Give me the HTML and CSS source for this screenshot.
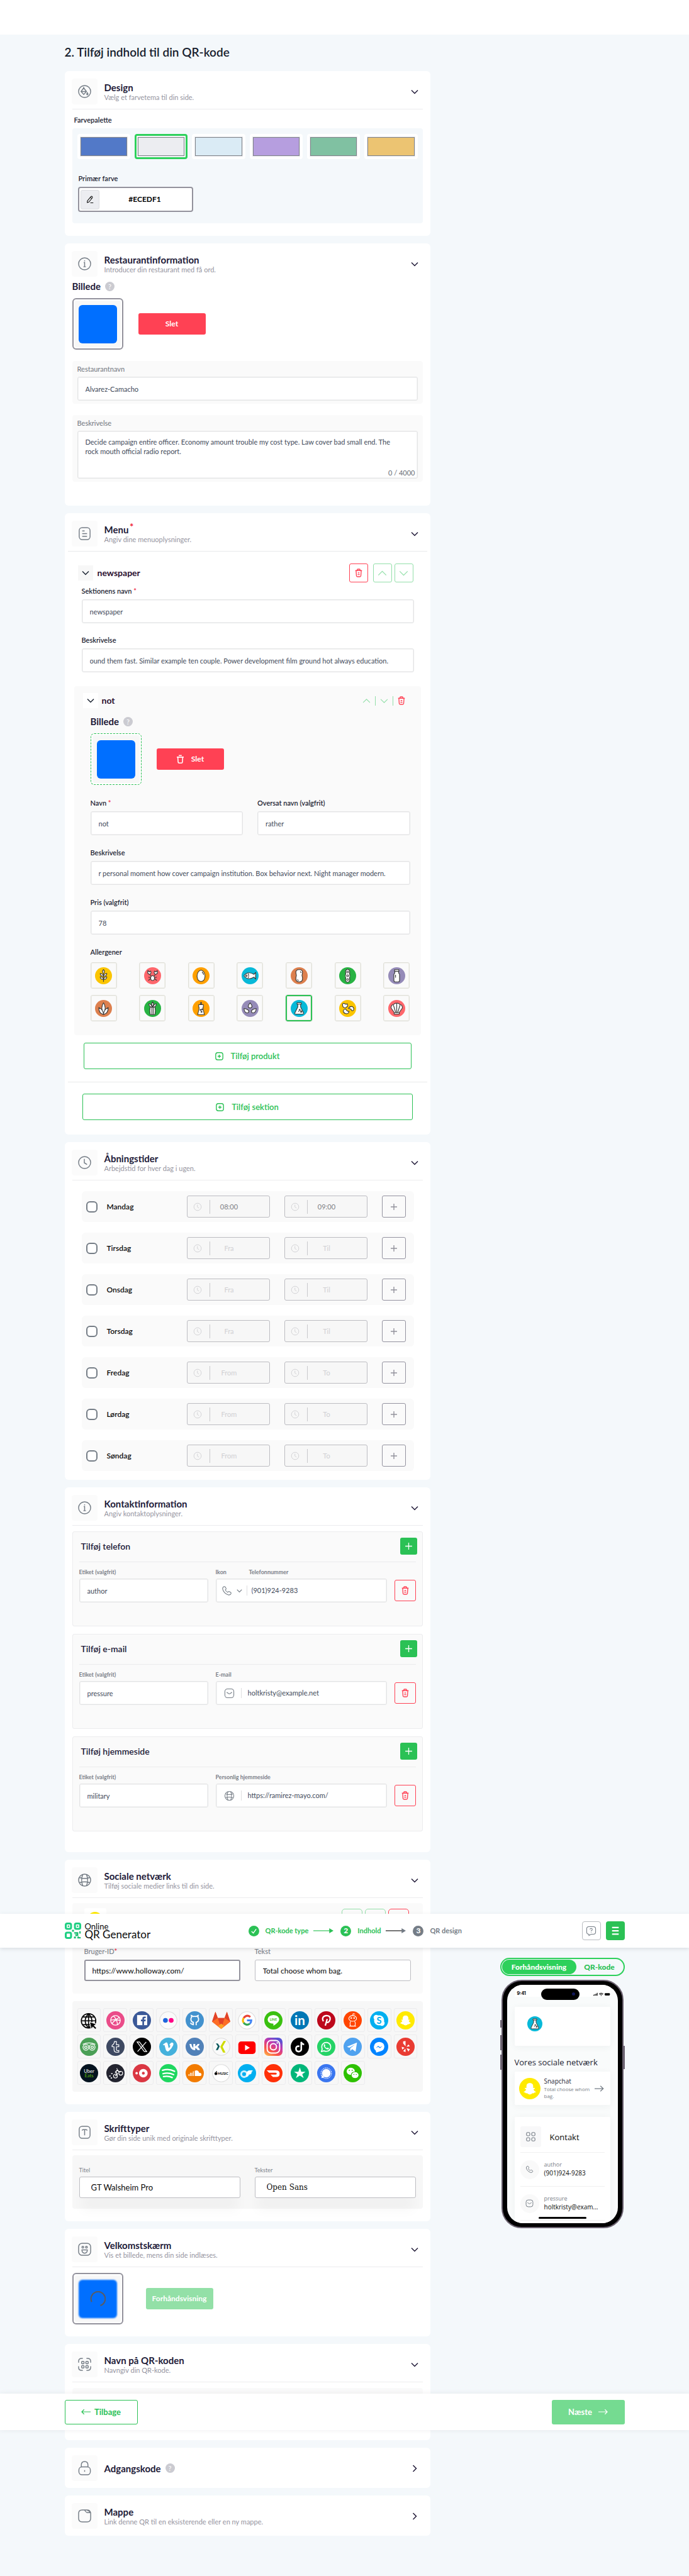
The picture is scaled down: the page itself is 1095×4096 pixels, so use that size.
FILE: index.html
```html
<!DOCTYPE html>
<html lang="da">
<head>
<meta charset="utf-8">
<meta name="viewport" content="width=device-width, initial-scale=1">
<title>Online QR Generator</title>
<link rel="stylesheet" href="styles.css">
</head>
<body>
<svg class="sprite" aria-hidden="true">
  <symbol id="down" viewBox="0 0 12 12"><path d="M1 3.5l5 5 5-5"/></symbol>
  <symbol id="up" viewBox="0 0 12 12"><path d="M1 8.5l5-5 5 5"/></symbol>
  <symbol id="right" viewBox="0 0 12 12"><path d="M3.5 1l5 5-5 5"/></symbol>
  <symbol id="plus" viewBox="0 0 12 12"><path d="M6 1v10M1 6h10"/></symbol>
  <symbol id="trash" viewBox="0 0 16 18"><path d="M1 4h14M5 4V2.2Q5 1 6.200 1h3.600Q11 1 11 2.200V4M2.500 4l.8 11q.1 2 2 2h5.400q1.900 0 2-2l.8-11M6.300 9h3.400M5.800 12.500h4.400"/></symbol>
  <symbol id="bin" viewBox="0 0 16 18"><path d="M1 5h14M5 1.500h6M3 5l.6 10q.1 2 2 2h4.800q1.900 0 2-2L13 5"/></symbol>
  <symbol id="clock" viewBox="0 0 24 24"><circle cx="12" cy="12" r="10"/><path d="M11.500 6v6.500l4.500 2.800"/></symbol>
  <symbol id="info" viewBox="0 0 24 24"><circle cx="12" cy="12" r="10"/><path d="M10.500 10H12v6.500M10 16.800h4M12 6.300v1.400"/></symbol>
  <symbol id="globe" viewBox="0 0 24 24"><circle cx="12" cy="12" r="10"/><path d="M3.500 7.800q8.500 2.600 17 0M3.500 16.200q8.500-2.600 17 0M9 2.500q-4 9.500 0 19M15 2.500q4 9.500 0 19"/></symbol>
  <symbol id="addbox" viewBox="0 0 16 16"><rect x="1" y="1" width="14" height="14" rx="4"/><path d="M8 4.800v6.400M4.800 8h6.400"/></symbol>
  <symbol id="phoneicon" viewBox="0 0 24 24"><path d="M6 2.500q-3.500 1-3.500 5Q4.500 17 15.500 21.300q4.500.5 6-3.300.5-1.500-1-2.500l-3-1.800q-1.200-.6-2.200.4l-1.200 1.300Q9.800 13.500 8.500 9.800l1.400-1.300q.9-1 .3-2.200L8.400 3.400Q7.500 2.200 6 2.500z"/></symbol>
  <symbol id="mail" viewBox="0 0 24 24"><rect x="2" y="2" width="20" height="20" rx="6"/><path d="M6 9.500l4.500 3.200q1.500.8 3 0L18 9.500"/></symbol>
  <symbol id="flask" viewBox="0 0 36 36"><circle cx="18" cy="18" r="18" fill="#08b9d8"/><path d="M15 8v7L9 27q-1 3 2 3h14q3 0 2-3l-6-12V8z" class="al"/><path d="M13.500 6h9v3h-9z" class="al"/><path d="M18 20h2v2h-2zM21 23.500h2.500V26H21zM16 23.500l2 1.500" class="al"/></symbol>
  <symbol id="ghost" viewBox="0 0 38 38"><circle cx="19" cy="19" r="19" fill="#ffea00"/><path d="M19 9q6 .3 6 6v3q2 0 3-.5.8 1.400-2.300 2.500.5 3.500 4.300 4.500-.5 1.500-3 1.400-.3 1.800-3 1.300-2.600 2.200-5 2.300-2.400-.1-5-2.300-2.700.5-3-1.300-2.500.1-3-1.400 3.800-1 4.300-4.500Q9.200 18.900 10 17.500q1 .5 3 .5v-3q0-5.700 6-6z" fill="#fff"/></symbol>
</svg>

<div class="topstrip"></div>

<main>
<div class="wrap">
  <h1>2. Tilføj indhold til din QR-kode</h1>
  <div class="stack">

    <section class="card">
      <header class="chead">
        <span class="ibox"><svg viewBox="0 0 24 24"><circle cx="12" cy="12" r="10"/><path d="M10.500 6l-4.500 6 4.500 5 4.500-5zM6.500 12h8.500M10.500 4.500V7M16.500 14q-2 3 0 3.400 2-.4 0-3.400z"/></svg></span>
        <div class="ctext"><h2>Design</h2><p>Vælg et farvetema til din side.</p></div>
        <svg class="chev"><use href="#down"/></svg>
      </header>
      <hr>
      <div class="cbody">
        <h3 class="label palette-label">Farvepalette</h3>
        <div class="palette">
          <div class="swatches">
            <button class="swatch" aria-label="Blå"><span class="c1"></span></button>
            <button class="swatch on" aria-label="Grå"><span class="c2"></span></button>
            <button class="swatch" aria-label="Lyseblå"><span class="c3"></span></button>
            <button class="swatch" aria-label="Lilla"><span class="c4"></span></button>
            <button class="swatch" aria-label="Grøn"><span class="c5"></span></button>
            <button class="swatch" aria-label="Gul"><span class="c6"></span></button>
          </div>
          <label class="label" for="primary">Primær farve</label>
          <div class="hex">
            <span class="pen"><svg viewBox="0 0 24 24"><path d="M5 16L14.500 4.500q2-1.600 3.500 0t.2 3.700L9 19.500l-4.500 1zM13 6.500l3.800 3.200M13 21.500h8"/></svg></span>
            <input id="primary" value="#ECEDF1">
          </div>
        </div>
      </div>
    </section>

    <section class="card">
      <header class="chead flat">
        <span class="ibox"><svg><use href="#info"/></svg></span>
        <div class="ctext"><h2>Restaurantinformation</h2><p>Introducer din restaurant med få ord.</p></div>
        <svg class="chev"><use href="#down"/></svg>
      </header>
      <div class="cbody rest">
        <h3 class="pic">Billede <span class="help">?</span></h3>
        <div class="picrow"><span class="thumb"><i></i></span><button class="del">Slet</button></div>
        <div class="field panel"><label for="rname">Restaurantnavn</label><input id="rname" value="Alvarez-Camacho"></div>
        <div class="field panel area"><label for="rdesc">Beskrivelse</label><textarea id="rdesc">Decide campaign entire officer. Economy amount trouble my cost type. Law cover bad small end. The
rock mouth official radio report.</textarea><span class="count">0 / 4000</span></div>
      </div>
    </section>

    <section class="card menu">
      <header class="chead">
        <span class="ibox"><svg viewBox="0 0 24 24"><rect x="3" y="2" width="18" height="20" rx="5"/><path d="M8 7.500h4M8 12h8M8 16.500h8"/></svg></span>
        <div class="ctext"><h2>Menu <sup>*</sup></h2><p>Angiv dine menuoplysninger.</p></div>
        <svg class="chev"><use href="#down"/></svg>
      </header>
      <hr class="wide">
      <div class="sechead">
        <button class="fold" aria-label="Fold"><svg><use href="#down"/></svg></button>
        <h3>newspaper</h3>
        <div class="tools">
          <button class="sq red" aria-label="Slet"><svg class="tr"><use href="#trash"/></svg></button>
          <button class="sq pale" aria-label="Op"><svg><use href="#up"/></svg></button>
          <button class="sq pale" aria-label="Ned"><svg><use href="#down"/></svg></button>
        </div>
      </div>
      <div class="secfields">
        <div class="field dark"><label for="sname">Sektionens navn <b>*</b></label><input id="sname" value="newspaper"></div>
        <div class="field dark"><label for="sdesc">Beskrivelse</label><input id="sdesc" value="ound them fast. Similar example ten couple. Power development film ground hot always education."></div>
      </div>
      <div class="product">
        <div class="prodhead">
          <button class="fold white" aria-label="Fold"><svg><use href="#down"/></svg></button>
          <h3>not</h3>
          <div class="mini">
            <button aria-label="Op"><svg><use href="#up"/></svg></button><i></i>
            <button aria-label="Ned"><svg><use href="#down"/></svg></button><i></i>
            <button class="rd" aria-label="Slet"><svg class="tr"><use href="#trash"/></svg></button>
          </div>
        </div>
        <div class="prodbody">
          <h3 class="pic">Billede <span class="help">?</span></h3>
          <div class="picrow"><span class="thumb dashed"><i></i></span><button class="del"><svg><use href="#bin"/></svg>Slet</button></div>
          <div class="two">
            <div class="field dark"><label for="pname">Navn <b>*</b></label><input id="pname" value="not"></div>
            <div class="field dark"><label for="ptrans">Oversat navn (valgfrit)</label><input id="ptrans" value="rather"></div>
          </div>
          <div class="field dark"><label for="pdesc">Beskrivelse</label><input id="pdesc" value="r personal moment how cover campaign institution. Box behavior next. Night manager modern."></div>
          <div class="field dark"><label for="price">Pris (valgfrit)</label><input id="price" value="78"></div>
          <h4 class="label">Allergener</h4>
          <div class="allergens">
            <button aria-label="Gluten"><svg viewBox="0 0 36 36"><circle cx="18" cy="18" r="18" fill="#fbc500"/><g class="al"><path d="M18 31V12"/><path d="M18 5q-4 4 0 9 4-5 0-9zM11 13q0 6 7 6-1-5-7-6zM25 13q0 6-7 6 1-5 7-6zM11 20q0 6 7 6-1-5-7-6zM25 20q0 6-7 6 1-5 7-6z"/></g></svg></button>
            <button aria-label="Krebsdyr"><svg viewBox="0 0 36 36"><circle cx="18" cy="18" r="18" fill="#fe676c"/><g class="al"><path d="M12 15q-6-1-4-8l3 3 3-2q2 5-2 7zM24 15q6-1 4-8l-3 3-3-2q-2 5 2 7z"/><path d="M12 15l3 4M24 15l-3 4M9 21l5 1M9 28l5-4M27 21l-5 1M27 28l-5-4"/><ellipse cx="18" cy="23" rx="4" ry="5"/></g></svg></button>
            <button aria-label="Æg"><svg viewBox="0 0 36 36"><circle cx="18" cy="18" r="18" fill="#ffa000"/><g class="al"><path d="M18 6q-8 2-8.500 13 1 11 8.500 11t8.500-11Q26 8 18 6zM20 10q3 2 3.500 6"/></g></svg></button>
            <button aria-label="Fisk"><svg viewBox="0 0 36 36"><circle cx="18" cy="18" r="18" fill="#08b9d8"/><g class="al"><path d="M5 18q8-11 21-3l4-4q-1 7 0 14l-4-4q-13 8-21-3z"/><circle cx="10" cy="18" r="1.500"/><path d="M14 13q2 5 0 10"/></g></svg></button>
            <button aria-label="Jordnødder"><svg viewBox="0 0 36 36"><circle cx="18" cy="18" r="18" fill="#dd804e"/><g class="al"><path d="M18 5q8 0 7 7-2 5 0 10 1 9-7 9t-7-9q2-5 0-10-1-7 7-7zM20 9q2 1 2 3M14 26q1 2 3 2"/></g></svg></button>
            <button aria-label="Soja"><svg viewBox="0 0 36 36"><circle cx="18" cy="18" r="18" fill="#28b343"/><g class="al"><path d="M18 4q6 2 4 9 2 5 0 10 2 7-4 9-6-2-4-9-2-5 0-10-2-7 4-9z"/><circle cx="18" cy="10" r="2"/><circle cx="18" cy="18" r="2"/><circle cx="18" cy="26" r="2"/></g></svg></button>
            <button aria-label="Mælk"><svg viewBox="0 0 36 36"><circle cx="18" cy="18" r="18" fill="#958bb8"/><g class="al"><path d="M14 8v4l-2 3v13q0 3 3 3h6q3 0 3-3V15l-2-3V8z"/><path d="M13.500 5h9v3.500h-9zM15.500 16v6"/></g></svg></button>
            <button aria-label="Nødder"><svg viewBox="0 0 36 36"><circle cx="18" cy="18" r="18" fill="#dd804e"/><g class="al"><path d="M18 6q-7 10 0 23 7-13 0-23z"/><path d="M8 16q0 13 10 15 0-10-10-15zM28 16q0 13-10 15 0-10 10-15z"/></g></svg></button>
            <button aria-label="Selleri"><svg viewBox="0 0 36 36"><circle cx="18" cy="18" r="18" fill="#28b343"/><g class="al"><path d="M13 15q-2 8 0 16h10q2-8 0-16zM16.500 14v17M19.500 14v17"/><path d="M18 4q-4 5 0 10 4-5 0-10zM10 8q0 6 7 8-1-7-7-8zM26 8q0 6-7 8 1-7 7-8z"/></g></svg></button>
            <button aria-label="Sennep"><svg viewBox="0 0 36 36"><circle cx="18" cy="18" r="18" fill="#ffa000"/><g class="al"><path d="M16.500 9l1-4h1l1 4zM13 10h10v4l-1 3 3 14H11l3-14-1-3z"/><path d="M16 20h1.500v2H16zM19.500 19H21v2h-1.500zM18 24h2v2h-2z"/></g></svg></button>
            <button aria-label="Sesam"><svg viewBox="0 0 36 36"><circle cx="18" cy="18" r="18" fill="#958bb8"/><g class="al"><path d="M18 6q-8 10 0 11 8-1 0-11z"/><path d="M5 18q1 11 9 9 5-6-9-9zM31 18q-1 11-9 9-5-6 9-9z"/></g></svg></button>
            <button class="on" aria-label="Sulfitter"><svg><use href="#flask"/></svg></button>
            <button aria-label="Lupin"><svg viewBox="0 0 36 36"><circle cx="18" cy="18" r="18" fill="#fbc500"/><g class="al"><path d="M7 9q2-3 5-1t5 0q3 6-3 8-7 2-7-7zM20 18q2-5 8-4 5 4 2 8-3 2-4-1t-6-3zM9 22q4-5 6-1t6 3q-1 6-7 5-6-2-5-7z"/></g></svg></button>
            <button aria-label="Bløddyr"><svg viewBox="0 0 36 36"><circle cx="18" cy="18" r="18" fill="#fe676c"/><g class="al"><path d="M13 27L6 17q0-7 5-7 3-4 7-3 4-1 7 3 5 0 5 7l-7 10zM16 27L11 11M20 27l5-16M18 27V7M12.500 27h11v3h-11z"/></g></svg></button>
          </div>
        </div>
      </div>
      <button class="add prod"><svg><use href="#addbox"/></svg>Tilføj produkt</button>
      <hr class="wide">
      <button class="add sect"><svg><use href="#addbox"/></svg>Tilføj sektion</button>
    </section>

    <section class="card">
      <header class="chead">
        <span class="ibox"><svg><use href="#clock"/></svg></span>
        <div class="ctext"><h2>Åbningstider</h2><p>Arbejdstid for hver dag i ugen.</p></div>
        <svg class="chev"><use href="#down"/></svg>
      </header>
      <hr>
      <div class="days">
        <div class="day"><label><input type="checkbox">Mandag</label><span class="time"><svg><use href="#clock"/></svg><input aria-label="Fra" value="08:00"></span><span class="time"><svg><use href="#clock"/></svg><input aria-label="Til" value="09:00"></span><button aria-label="Tilføj"><svg><use href="#plus"/></svg></button></div>
        <div class="day"><label><input type="checkbox">Tirsdag</label><span class="time"><svg><use href="#clock"/></svg><input aria-label="Fra" placeholder="Fra"></span><span class="time"><svg><use href="#clock"/></svg><input aria-label="Til" placeholder="Til"></span><button aria-label="Tilføj"><svg><use href="#plus"/></svg></button></div>
        <div class="day"><label><input type="checkbox">Onsdag</label><span class="time"><svg><use href="#clock"/></svg><input aria-label="Fra" placeholder="Fra"></span><span class="time"><svg><use href="#clock"/></svg><input aria-label="Til" placeholder="Til"></span><button aria-label="Tilføj"><svg><use href="#plus"/></svg></button></div>
        <div class="day"><label><input type="checkbox">Torsdag</label><span class="time"><svg><use href="#clock"/></svg><input aria-label="Fra" placeholder="Fra"></span><span class="time"><svg><use href="#clock"/></svg><input aria-label="Til" placeholder="Til"></span><button aria-label="Tilføj"><svg><use href="#plus"/></svg></button></div>
        <div class="day"><label><input type="checkbox">Fredag</label><span class="time"><svg><use href="#clock"/></svg><input aria-label="From" placeholder="From"></span><span class="time"><svg><use href="#clock"/></svg><input aria-label="To" placeholder="To"></span><button aria-label="Tilføj"><svg><use href="#plus"/></svg></button></div>
        <div class="day"><label><input type="checkbox">Lørdag</label><span class="time"><svg><use href="#clock"/></svg><input aria-label="From" placeholder="From"></span><span class="time"><svg><use href="#clock"/></svg><input aria-label="To" placeholder="To"></span><button aria-label="Tilføj"><svg><use href="#plus"/></svg></button></div>
        <div class="day"><label><input type="checkbox">Søndag</label><span class="time"><svg><use href="#clock"/></svg><input aria-label="From" placeholder="From"></span><span class="time"><svg><use href="#clock"/></svg><input aria-label="To" placeholder="To"></span><button aria-label="Tilføj"><svg><use href="#plus"/></svg></button></div>
      </div>
    </section>

    <section class="card">
      <header class="chead">
        <span class="ibox"><svg><use href="#info"/></svg></span>
        <div class="ctext"><h2>Kontaktinformation</h2><p>Angiv kontaktoplysninger.</p></div>
        <svg class="chev"><use href="#down"/></svg>
      </header>
      <hr>
      <div class="cbody contacts">
        <div class="contact">
          <div class="conhead"><h3>Tilføj telefon</h3><button aria-label="Tilføj"><svg><use href="#plus"/></svg></button></div>
          <div class="conrow">
            <div class="cf"><label for="tl">Etiket (valgfrit)</label><input class="box" id="tl" value="author"></div>
            <div class="cf"><div class="pair"><span>Ikon</span><label for="tn">Telefonnummer</label></div>
              <div class="box combo tel"><svg><use href="#phoneicon"/></svg><svg class="dn"><use href="#down"/></svg><i></i><input id="tn" value="(901)924-9283"></div></div>
            <button class="sq red" aria-label="Slet"><svg class="tr"><use href="#trash"/></svg></button>
          </div>
        </div>
        <div class="contact">
          <div class="conhead"><h3>Tilføj e-mail</h3><button aria-label="Tilføj"><svg><use href="#plus"/></svg></button></div>
          <div class="conrow">
            <div class="cf"><label for="el">Etiket (valgfrit)</label><input class="box" id="el" value="pressure"></div>
            <div class="cf"><label for="ea">E-mail</label>
              <div class="box combo"><svg><use href="#mail"/></svg><i></i><input id="ea" value="holtkristy@example.net"></div></div>
            <button class="sq red" aria-label="Slet"><svg class="tr"><use href="#trash"/></svg></button>
          </div>
        </div>
        <div class="contact">
          <div class="conhead"><h3>Tilføj hjemmeside</h3><button aria-label="Tilføj"><svg><use href="#plus"/></svg></button></div>
          <div class="conrow">
            <div class="cf"><label for="wl">Etiket (valgfrit)</label><input class="box" id="wl" value="military"></div>
            <div class="cf"><label for="wa">Personlig hjemmeside</label>
              <div class="box combo"><svg><use href="#globe"/></svg><i></i><input id="wa" value="https://ramirez-mayo.com/"></div></div>
            <button class="sq red" aria-label="Slet"><svg class="tr"><use href="#trash"/></svg></button>
          </div>
        </div>
      </div>
    </section>
  </div>
</div>

<div class="zone">
  <div class="topbar">
    <div class="barin">
      <a class="logo" href="#">
        <svg viewBox="0 0 34 34"><g fill="none" stroke="#1fcf83" stroke-width="4"><rect x="2" y="2" width="11" height="11" rx="3"/><rect x="21" y="2" width="11" height="11" rx="3"/><rect x="2" y="21" width="11" height="11" rx="3"/></g><g fill="#1fbf74"><rect x="6" y="6" width="3" height="3"/><rect x="25" y="6" width="3" height="3"/><rect x="15" y="15" width="4" height="4"/><path d="M19 20h9v8h-5v5h-4v-4h4zm3 3v2h2v-2zM30 18h3v5h-3zM29 30h4v3h-7v-3l3-2z"/></g></svg>
        <span><small>Online</small>QR Generator</span>
      </a>
      <ol class="steps">
        <li class="ok"><b><svg viewBox="0 0 12 12"><path d="M2 6.500l3 3 5-7"/></svg></b>QR-kode type</li>
        <li class="arr"><svg viewBox="0 0 34 8"><path d="M0 4h28" stroke="#2bc155"/><path d="M26 0l7 4-7 4z" fill="#2bc155" stroke="none"/></svg></li>
        <li class="ok"><b>2</b>Indhold</li>
        <li class="arr"><svg viewBox="0 0 34 8"><path d="M0 4h28" stroke="#111"/><path d="M26 0l7 4-7 4z" fill="#727a84" stroke="none"/></svg></li>
        <li><b>3</b>QR design</li>
      </ol>
      <div class="acts">
        <button class="ask" aria-label="Hjælp"><svg viewBox="0 0 24 24"><path d="M7 2h10q5 0 5 5v7q0 5-5 5h-5l-5 3v-3q-5 0-5-5V7q0-5 5-5zM9.500 8.500q0-2.500 2.500-2.500t2.500 2.300q0 1.500-1.500 2.200-1 .6-1 1.800M12 14.500v1"/></svg></button>
        <button class="burger" aria-label="Menu"><svg viewBox="0 0 24 24"><path d="M5 5h14M5 12h14M5 19h14"/></svg></button>
      </div>
    </div>
  </div>
  <div class="wrap split">
    <div class="stack">
      <section class="card">
        <header class="chead">
          <span class="ibox"><svg><use href="#globe"/></svg></span>
          <div class="ctext"><h2>Sociale netværk</h2><p>Tilføj sociale medier links til din side.</p></div>
          <svg class="chev"><use href="#down"/></svg>
        </header>
        <hr>
        <div class="cbody social">
          <div class="netform">
            <div class="nethead"><span class="snap"><svg><use href="#ghost"/></svg></span>
              <div class="tools"><button class="sq pale" aria-label="Op"></button><button class="sq pale" aria-label="Ned"></button><button class="sq red" aria-label="Slet"></button></div></div>
            <div class="two">
              <div class="field"><label for="uid">Bruger-ID<b>*</b></label><input class="focus" id="uid" value="https://www.holloway.com/"></div>
              <div class="field"><label for="utx">Tekst</label><input id="utx" value="Total choose whom bag."></div>
            </div>
          </div>
          <div class="nets">
            <button aria-label="Web"><svg viewBox="0 0 38 38"><g fill="none" stroke="#000" stroke-width="2.200"><circle cx="18" cy="20" r="15"/><path d="M18 5v30M3 20h30M6 12h24M6 28h24M18 5q-14 15 0 30M18 5q14 15 0 30"/></g><path d="M20 22l15 5-5 3 5 5-3 3-5-5-3 5z" stroke="#f7f7f7"/></svg></button>
            <button aria-label="Dribbble"><svg viewBox="0 0 38 38"><circle cx="19" cy="19" r="19" fill="#ea4c89"/><g fill="none" stroke="#fff" stroke-width="1.800"><circle cx="19" cy="19" r="10"/><path d="M15 10q8 8 8 18M9 18q13 1 18-6M12 26q5-10 17-7"/></g></svg></button>
            <button aria-label="Facebook"><svg viewBox="0 0 38 38"><circle cx="19" cy="19" r="19" fill="#3b5998"/><path d="M9 8h21v21H9z" fill="#fff"/><path d="M20 29v-8h-3v-3.500h3V15q0-4 4-4h3v3.500h-2q-1.500 0-1.500 1.500v1.500H27l-.5 3.500h-3v8z" fill="#3b5998"/></svg></button>
            <button aria-label="Flickr"><svg viewBox="0 0 38 38"><circle cx="19" cy="19" r="18" fill="#fafafa" stroke="#ddd"/><circle cx="13" cy="19" r="5" fill="#1c64dc"/><circle cx="25" cy="19" r="5" fill="#ff0084"/></svg></button>
            <button aria-label="GitHub"><svg viewBox="0 0 38 38"><circle cx="19" cy="19" r="19" fill="#4392ce"/><path d="M16 29v-6q-5-1-5-7 0-2 1.500-3.500L12 9l4 2q3-.8 6 0l4-2-.5 3.500Q27 14 27 16q0 6-5 7v6M16 27q-4 1-6-3" fill="none" stroke="#fff" stroke-width="2.400"/></svg></button>
            <button aria-label="GitLab"><svg viewBox="0 0 38 38"><path d="M19 37L0 22 7 1l5 13h14l5-13 7 21z" fill="#fc6d26"/><path d="M0 22L7 1l5 13zM38 22L31 1l-5 13zM12 14h14l-7 23z" fill="#e24329"/><path d="M19 37l-6-7 6-4 6 4z" fill="#fca326"/></svg></button>
            <button aria-label="Google"><svg viewBox="0 0 38 38"><circle cx="19" cy="19" r="18" fill="#fff" stroke="#ddd"/><g fill="none" stroke-width="4"><path d="M12 14q7-8 14-2" stroke="#ea4335"/><path d="M12 14q-3 5 0 10" stroke="#fbbc05"/><path d="M12 24q6 7 13 2" stroke="#34a853"/><path d="M25 26q3-3 3-7h-9" stroke="#4285f4"/></g></svg></button>
            <button aria-label="LINE"><svg viewBox="0 0 38 38"><circle cx="19" cy="19" r="19" fill="#3ac010"/><path d="M19 8q12 1 12 10-1 6-12 12v-4Q7 25 7 17q1-8 12-9z" fill="#fff"/><text x="19" y="20" font-size="7" fill="#3ac010">LINE</text></svg></button>
            <button aria-label="LinkedIn"><svg viewBox="0 0 38 38"><circle cx="19" cy="19" r="19" fill="#0077b5"/><text x="19" y="29" font-size="27" fill="#fff">in</text></svg></button>
            <button aria-label="Pinterest"><svg viewBox="0 0 38 38"><circle cx="19" cy="19" r="19" fill="#bd081c"/><path d="M17 30l4-14M13 21q-5-10 6-12 9 0 8 8-2 8-8 6" fill="none" stroke="#fff" stroke-width="3"/></svg></button>
            <button aria-label="Reddit"><svg viewBox="0 0 38 38"><circle cx="19" cy="19" r="19" fill="#ff4500"/><g fill="none" stroke="#fff" stroke-width="1.400"><ellipse cx="19" cy="15" rx="8" ry="6"/><path d="M15 21q-3 5 0 10h8q3-5 0-10M19 9l1-4 4 1M12 31h14"/><circle cx="16" cy="14" r="1"/><circle cx="22" cy="14" r="1"/></g></svg></button>
            <button aria-label="Skype"><svg viewBox="0 0 38 38"><circle cx="19" cy="19" r="19" fill="#00aff0"/><circle cx="19" cy="19" r="10.500" fill="#fff"/><circle cx="13" cy="13" r="5.500" fill="#fff"/><circle cx="25" cy="25" r="5.500" fill="#fff"/><text x="19" y="26" font-size="19" fill="#00aff0">S</text></svg></button>
            <button aria-label="Snapchat"><svg><use href="#ghost"/></svg></button>
            <button aria-label="Tripadvisor"><svg viewBox="0 0 38 38"><circle cx="19" cy="19" r="19" fill="#4a9f56"/><g fill="none" stroke="#fff" stroke-width="1.800"><circle cx="12.500" cy="20" r="6"/><circle cx="25.500" cy="20" r="6"/><circle cx="12.500" cy="20" r="2.500"/><circle cx="25.500" cy="20" r="2.500"/><path d="M6 14q13-6 26 0"/></g></svg></button>
            <button aria-label="Tumblr"><svg viewBox="0 0 38 38"><circle cx="19" cy="19" r="19" fill="#3d4861"/><path d="M17 8h4v7h5v4h-5v6q0 3 5 1.500V30q-10 2-10-5v-6h-4v-3q4-2 5-8z" fill="none" stroke="#fff" stroke-width="1.600"/></svg></button>
            <button aria-label="X"><svg viewBox="0 0 38 38"><circle cx="19" cy="19" r="19"/><path d="M9 9h5l15 20h-5zM28 9L10 29" fill="none" stroke="#fff" stroke-width="1.600"/></svg></button>
            <button aria-label="Vimeo"><svg viewBox="0 0 38 38"><circle cx="19" cy="19" r="19" fill="#45b1dc"/><path d="M8 14l6-4q3-1 4 4l1.500 7q1 2 3.500-3 1-3-2-2 2-6 6-6 4 1 2 6-3 7-9 12-4 2-6-2l-3-11-2 1z" fill="#fff"/></svg></button>
            <button aria-label="VK"><svg viewBox="0 0 38 38"><circle cx="19" cy="19" r="19" fill="#5181b8"/><path d="M8 13h4q1 6 4 8v-8h4v5q3-1 5-5h4q-1 4-4 6 3 2 5 7h-5q-2-4-5-4.500V26Q10 27 8 13z" fill="#fff"/></svg></button>
            <button aria-label="Xing"><svg viewBox="0 0 38 38"><circle cx="19" cy="19" r="18" fill="#fafafa" stroke="#ddd"/><path d="M8 12h4l4 6-4 8H8l4-8z" fill="#0a5a5d"/><path d="M24 7h5l-7 12 6 12h-5l-6-12z" fill="#cfdc00"/></svg></button>
            <button aria-label="YouTube"><svg viewBox="0 0 38 38"><rect x="1" y="8" width="36" height="26" rx="6" fill="#f00"/><path d="M15 15l10 6-10 6z" fill="#fff"/></svg></button>
            <button aria-label="Instagram"><svg viewBox="0 0 38 38"><defs><linearGradient id="ig" x1="0" y1="1" x2=".6" y2="0"><stop offset="0" stop-color="#fdc84c"/><stop offset=".35" stop-color="#fb5245"/><stop offset=".7" stop-color="#c837ab"/><stop offset="1" stop-color="#5a52d5"/></linearGradient></defs><rect width="38" height="38" rx="9" fill="url(#ig)"/><g fill="none" stroke="#fff" stroke-width="2.600"><rect x="6" y="6" width="26" height="26" rx="8"/><circle cx="19" cy="19" r="6.500"/></g><circle cx="27" cy="11" r="1.600" fill="#fff"/></svg></button>
            <button aria-label="TikTok"><svg viewBox="0 0 38 38"><circle cx="19" cy="19" r="19"/><path d="M18 18q-7-1-7 5t6 6q6-1 5-7V9q1 5 6 5" fill="none" stroke="#fff" stroke-width="3.400"/></svg></button>
            <button aria-label="WhatsApp"><svg viewBox="0 0 38 38"><circle cx="19" cy="19" r="19" fill="#25d366"/><path d="M9 29l1.500-5.500q-3-8 4-12.500 8-3 13 4 3 8-4 12.500-5 2-9 0z" fill="none" stroke="#fff" stroke-width="2.200"/><path d="M14 14q2-2 3 2l-1 2q2 3 4 4l2-1q4 1 2 3-4 2-8-3-3-3-2-7z" fill="#fff"/></svg></button>
            <button aria-label="Telegram"><svg viewBox="0 0 38 38"><circle cx="19" cy="19" r="19" fill="#50a2ef"/><path d="M7 19l21-9-3 19-7-5-4 4v-6l10-8-12 7z" fill="#fff"/></svg></button>
            <button aria-label="Messenger"><svg viewBox="0 0 38 38"><circle cx="19" cy="19" r="19" fill="#0084ff"/><path d="M19 9q11 1 11 10-1 9-11 10l-6 2-1-4q-4-3-4-8 1-9 11-10z" fill="#fff"/><path d="M12 22l5-5 4 3 5-3-5 5-4-3z" fill="#0084ff"/></svg></button>
            <button aria-label="Yelp"><svg viewBox="0 0 38 38"><circle cx="19" cy="19" r="19" fill="#e93b32"/><path d="M14 8l5-1v11l-5-6zM11 19l6 2-5 4zM19 23v7l-5-2zM21 22l7 2-3 5zM21 19l4-5 3 4z" fill="#fff"/></svg></button>
            <button aria-label="Uber Eats"><svg viewBox="0 0 38 38" class="thin"><circle cx="19" cy="19" r="19" fill="#04131f"/><text x="19" y="18" font-size="10" fill="#fff">Uber</text><text x="19" y="28" font-size="10" fill="#5fb709">Eats</text></svg></button>
            <button aria-label="Postmates"><svg viewBox="0 0 38 38"><circle cx="19" cy="19" r="19" fill="#232430"/><g fill="none" stroke="#fff" stroke-width="1.500"><circle cx="19" cy="25" r="4"/><circle cx="30" cy="19" r="4"/><path d="M19 25l4-5-4-3 4-5 3 4h4M22 10v-1M6 25h3M10 20h3M9 29h3" stroke-width="2"/></g></svg></button>
            <button aria-label="Opentable"><svg viewBox="0 0 38 38"><circle cx="19" cy="19" r="19" fill="#da3743"/><circle cx="22" cy="19" r="6" fill="none" stroke="#fff" stroke-width="6"/><circle cx="8" cy="19" r="2.500" fill="#fff"/></svg></button>
            <button aria-label="Spotify"><svg viewBox="0 0 38 38"><circle cx="19" cy="19" r="19" fill="#1ed760"/><path d="M7 13q13-4 25 2M8 20q11-3 22 2M9 26q10-2 18 2" fill="none" stroke="#fff" stroke-width="3" stroke-linecap="round"/></svg></button>
            <button aria-label="SoundCloud"><svg viewBox="0 0 38 38"><circle cx="19" cy="19" r="19" fill="#f27b00"/><path d="M19 25V14q7-3 9 4 5 0 5 4 0 3-3 3z" fill="#fff"/><path d="M7 21v4M10 18v7M13 18v7M16 15v10" stroke="#fff" stroke-width="1.600"/></svg></button>
            <button aria-label="Apple Music"><svg viewBox="0 0 38 38"><circle cx="19" cy="19" r="18" fill="#fff" stroke="#ddd"/><ellipse cx="8" cy="20" rx="2.800" ry="3"/><path d="M8 17l2-2" stroke="#000"/><text x="22.500" y="22" font-size="7">MUSIC</text></svg></button>
            <button aria-label="OnlyFans"><svg viewBox="0 0 38 38"><circle cx="19" cy="19" r="19" fill="#00aff0"/><circle cx="13" cy="21" r="6" fill="none" stroke="#cdeefb" stroke-width="4"/><path d="M18 19q1-6 7-6h6q-1 4-5 4h3q-1 5-6 5-1 5-6 5z" fill="#fff"/></svg></button>
            <button aria-label="DoorDash"><svg viewBox="0 0 38 38"><circle cx="19" cy="19" r="19" fill="#ff3008"/><path d="M5 13h19q8 0 8 7t-7 7h-7l-5-5h11q2-.5 2-2t-2-2H10z" fill="#fff"/></svg></button>
            <button aria-label="Trustpilot"><svg viewBox="0 0 38 38"><circle cx="19" cy="19" r="19" fill="#00b67a"/><path d="M19 7l3 9h9l-7 5 3 8-8-5-8 5 3-8-7-5h9z" fill="#fff"/></svg></button>
            <button aria-label="Signal"><svg viewBox="0 0 38 38"><circle cx="19" cy="19" r="19" fill="#3a76f0"/><circle cx="19" cy="19" r="9" fill="#fff"/><circle cx="19" cy="19" r="11" fill="none" stroke="#fff" stroke-width="1.300" stroke-dasharray="3 1"/><path d="M9 29l1-6 5 5z" fill="#fff"/></svg></button>
            <button aria-label="WeChat"><svg viewBox="0 0 38 38"><circle cx="19" cy="19" r="19" fill="#2dc100"/><ellipse cx="15" cy="15" rx="8.500" ry="7.500" fill="#fff"/><ellipse cx="24" cy="23" rx="8" ry="7" fill="#fff" stroke="#2dc100"/><g fill="#2dc100"><circle cx="12" cy="13" r="1.200"/><circle cx="18" cy="13" r="1.200"/><circle cx="21.500" cy="21.500" r="1"/><circle cx="26.500" cy="21.500" r="1"/></g></svg></button>
          </div>
        </div>
      </section>

      <section class="card">
        <header class="chead">
          <span class="ibox"><svg viewBox="0 0 24 24"><rect x="3" y="2" width="18" height="20" rx="5"/><path d="M8 9q0-1.500 1.500-1.500h5Q16 7.500 16 9M12 7.500V17"/></svg></span>
          <div class="ctext"><h2>Skrifttyper</h2><p>Gør din side unik med originale skrifttyper.</p></div>
          <svg class="chev"><use href="#down"/></svg>
        </header>
        <hr>
        <div class="cbody">
          <div class="fonts">
            <div><label for="ft">Titel</label><select id="ft"><option>GT Walsheim Pro</option></select></div>
            <div><label for="fx">Tekster</label><select id="fx" class="serif"><option>Open Sans</option></select></div>
          </div>
        </div>
      </section>

      <section class="card">
        <header class="chead">
          <span class="ibox"><svg viewBox="0 0 24 24"><rect x="2" y="2" width="20" height="20" rx="6"/><circle cx="9" cy="8.500" r="1.500"/><circle cx="15" cy="8.500" r="1.500"/><path d="M7.500 13h9q0 5-4.500 5.500Q7.500 18 7.500 13z"/></svg></span>
          <div class="ctext"><h2>Velkomstskærm</h2><p>Vis et billede, mens din side indlæses.</p></div>
          <svg class="chev"><use href="#down"/></svg>
        </header>
        <hr>
        <div class="cbody welcome">
          <span class="thumb soft"><i></i><svg viewBox="0 0 32 32"><path d="M3.500 22A14.500 14.500 0 1 1 21 29.500"/></svg></span>
          <button class="show">Forhåndsvisning</button>
        </div>
      </section>
    </div>

    <aside class="preview">
      <div class="toggle"><button class="act">Forhåndsvisning</button><button>QR-kode</button></div>
      <div class="phone">
        <i class="key k1"></i><i class="key k2"></i><i class="key k3"></i><i class="key k4"></i>
        <div class="screen">
          <div class="status"><span>9:41</span><svg viewBox="0 0 36 8"><path d="M0 7V5h1.500v2zM2.500 7V4H4v3zM5 7V2.500h1.500V7zM7.500 7V1H9v6z"/><path d="M12 3q4.500-3 9 0M13.500 4.800q3-2 6 0" fill="none" stroke="#000" stroke-width="1.300"/><circle cx="16.500" cy="6.500" r=".9"/><rect x="24" y="1.500" width="11" height="5" rx="1.500"/></svg></div>
          <div class="island"><i></i></div>
          <div class="pc one"><svg><use href="#flask"/></svg></div>
          <h3>Vores sociale netværk</h3>
          <div class="pc two2"><svg class="gh"><use href="#ghost"/></svg><div><b>Snapchat</b><small>Total choose whom bag.</small></div><svg class="go" viewBox="0 0 18 12"><path d="M0 6h16M11 1l5.500 5-5.500 5"/></svg></div>
          <div class="pc three">
            <div class="kon"><span><svg viewBox="0 0 20 20"><rect x="1" y="1" width="7" height="7" rx="2.500"/><rect x="12" y="1" width="7" height="7" rx="2.500"/><rect x="1" y="12" width="7" height="7" rx="2.500"/><rect x="12" y="12" width="7" height="7" rx="2.500"/></svg></span><b>Kontakt</b></div>
            <div class="line"><span><svg><use href="#phoneicon"/></svg></span><p><small>author</small>(901)924-9283</p></div>
            <div class="line"><span><svg><use href="#mail"/></svg></span><p><small>pressure</small>holtkristy@exam...</p></div>
            <div class="line"></div>
          </div>
          <i class="home"></i>
        </div>
      </div>
    </aside>
  </div>
</div>

<div class="zone end">
  <div class="wrap">
    <div class="stack">
      <section class="card">
        <header class="chead">
          <span class="ibox"><svg viewBox="0 0 24 24"><path d="M2 9V7q0-5 5-5h2M15 2h2q5 0 5 5v2M22 15v2q0 5-5 5h-2M9 22H7q-5 0-5-5v-2"/><rect x="7" y="7" width="4" height="4" rx="1"/><rect x="14" y="7" width="4" height="4" rx="1"/><rect x="7" y="14" width="4" height="4" rx="1"/><rect x="14" y="14" width="4" height="4" rx="1"/></svg></span>
          <div class="ctext"><h2>Navn på QR-koden</h2><p>Navngiv din QR-kode.</p></div>
          <svg class="chev"><use href="#down"/></svg>
        </header>
        <hr>
        <div class="cbody last"><div class="field panel"><label for="qn">Navn</label><input id="qn"></div></div>
      </section>
      <section class="card">
        <header class="chead closed">
          <span class="ibox"><svg viewBox="0 0 24 24"><rect x="2.500" y="10" width="19" height="13" rx="5"/><path d="M6.500 10V7q0-6 5.500-6t5.500 6v3M12 15.500v2.500"/></svg></span>
          <div class="ctext"><h2 class="pic">Adgangskode <span class="help">?</span></h2></div>
          <svg class="chev"><use href="#right"/></svg>
        </header>
      </section>
      <section class="card">
        <header class="chead closed">
          <span class="ibox"><svg viewBox="0 0 24 24"><path d="M8 2h8q5 0 6 5v9q0 6-6 6H8q-6 0-6-6V8q0-6 6-6zM12 2.500q3 4 4 4h5.500M16 3q4 0 5 4"/></svg></span>
          <div class="ctext"><h2>Mappe</h2><p>Link denne QR til en eksisterende eller en ny mappe.</p></div>
          <svg class="chev"><use href="#right"/></svg>
        </header>
      </section>
    </div>
  </div>
  <div class="botbar">
    <div class="barin">
      <button class="back"><svg viewBox="0 0 16 10"><path d="M16 5H1M5 1L1 5l4 4"/></svg>Tilbage</button>
      <button class="next">Næste<svg viewBox="0 0 16 10"><path d="M0 5h15M11 1l4 4-4 4"/></svg></button>
    </div>
  </div>
</div>
</main>
</body>
</html>
```
FILE: styles.css
```css
* { box-sizing: border-box; margin: 0; padding: 0; }
body {
  font: 11px/14px Lato, "Liberation Sans", sans-serif;
  color: #1d2433;
  background: #f4f8fb;
}
button, input, textarea, select { font: inherit; color: inherit; border: 0; background: none; outline: 0; }
button { cursor: pointer; display: flex; align-items: center; justify-content: center; }
svg { fill: none; stroke: currentColor; stroke-width: 1.5; display: block; flex: none; }
.sprite { position: absolute; width: 0; height: 0; }
h1 { font-size: 19px; line-height: 24px; font-weight: 600; color: #161d2d; margin-bottom: 18px; }
h2, h3 { font-weight: 700; color: #211a38; }
hr { border: 0; height: 1px; background: #ececee; margin: 0 12px; }
hr.wide { margin: 0 5px; background: #e8e9ea; }

.topstrip { height: 55px; background: #fff; }
main { padding: 16px 0 64px; }
.wrap { max-width: 890px; margin: 0 auto; }
.stack { display: flex; flex-direction: column; gap: 12px; width: 581px; max-width: 100%; }
.zone { position: relative; margin-top: 12px; }
.split { display: flex; justify-content: space-between; align-items: flex-start; }

/* cards */
.card { background: #fff; border-radius: 6px; }
.chead { display: flex; align-items: center; gap: 11px; padding: 12px 19px 7px 11px; }
.chead.flat { padding-bottom: 0; }
.chead.closed { padding-bottom: 11px; }
.ibox { width: 41px; height: 41px; border-radius: 4px; background: #fbfbfb; display: grid; place-items: center; color: #757d86; }
.ibox svg { width: 23px; height: 23px; }
.ctext { flex: 1; }
.ctext h2 { font-size: 15px; line-height: 18px; }
.ctext h2 sup { color: #ef1b33; font-size: 15px; line-height: 0; vertical-align: 5px; margin-left: -2px; }
.ctext p { color: #96959f; }
.chev { width: 12px; height: 12px; color: #211a38; stroke-width: 1.5; }
.cbody { padding: 0 12px 20px; }
.label { font-size: 11px; line-height: 14px; font-weight: 600; color: #1d2433; display: block; }
.help { width: 15px; height: 15px; border-radius: 50%; background: #cbcbd1; color: #fff; font-size: 11px; line-height: 15px; font-weight: 400; text-align: center; }
.pic { display: flex; align-items: center; gap: 7px; font-size: 15px; line-height: 18px; }

/* design */
.palette-label { margin: 10px 0 6px 3px; }
.palette { background: #f4f8fb; border-radius: 4px; padding: 9px 8px 18px; }
.swatches { display: grid; grid-template-columns: repeat(6, 1fr); gap: 7px; margin-bottom: 24px; }
.swatch { height: 40px; border: 3px solid #fff; border-radius: 4px; background: #fff; }
.swatch.on { border-color: #2dd05b; }
.swatch span { flex: 1; align-self: stretch; margin: 2px; border: 1px solid #7f8288; box-shadow: 0 0 0 1px #e9eaee; }
.c1 { background: #5279c8; }
.c2 { background: #ecedf1; }
.c3 { background: #daebf5; }
.c4 { background: #b69edf; }
.c5 { background: #80c1a2; }
.c6 { background: #ecc472; }
.palette .label { margin: 0 0 6px 2px; }
.hex { width: 183px; height: 40px; margin-left: 1px; border: 2px solid #93929c; border-radius: 4px; background: #fff; display: flex; align-items: center; padding: 2px; }
.pen { width: 30px; height: 31px; border-radius: 3px; background: #ecedf1; border: 1px solid #dcdde1; display: grid; place-items: center; color: #111; }
.pen svg { width: 14px; height: 14px; stroke-width: 1.800; }
.hex input { flex: 1; min-width: 0; text-align: center; font-weight: 700; font-size: 12px; color: #000; }

/* fields */
.field { display: flex; flex-direction: column; }
.field label { color: #7a8088; margin-bottom: 5px; font-weight: 500; }
.field label b { color: #ef4358; font-weight: 700; }
.field input, .field textarea, .box { height: 38px; border: 1px solid #e3e4e5; box-shadow: inset 0 0 0 1px #f3f3f4; border-radius: 3px; background: #fff; padding: 0 12px; color: #434b5b; width: 100%; }
.field textarea { height: 76px; padding: 9px 12px; line-height: 15px; resize: none; display: block; overflow: hidden; }
.field.dark label { color: #1d2433; font-weight: 600; margin-bottom: 6px; }
.panel { background: #fafafa; border-radius: 4px; padding: 6px 8px 5px; }
.area { position: relative; }
.count { position: absolute; right: 12px; bottom: 7px; color: #6a6f78; }
.rest { padding: 6px 12px 38px; }
.picrow { display: flex; align-items: center; gap: 24px; margin-top: 10px; }
.thumb { width: 81px; height: 82px; border: 2px solid #93929c; border-radius: 6px; background: #f7f7f7; display: grid; place-items: center; position: relative; box-shadow: inset 0 0 0 2px #fff; }
.thumb i { width: 61px; height: 61px; border-radius: 6px; background: #006fff; }
.thumb.dashed { border: 1px dashed #2bc155; }
.thumb.soft i { filter: blur(1px); }
.thumb svg { position: absolute; inset: 0; margin: auto; width: 25px; height: 25px; color: #575c66; stroke-width: 2.600; }
.del, .show { width: 107px; height: 34px; border-radius: 3px; background: #ff4154; color: #fff; font-weight: 700; gap: 11px; font-size: 12px; }
.del svg { width: 13px; height: 14px; stroke-width: 2; }
.rest .panel { margin-top: 18px; }

/* menu */
.sechead { display: flex; align-items: center; gap: 7px; margin: 19px 27px 7px 21px; }
.sechead h3, .prodhead h3 { flex: 1; font-size: 14px; line-height: 18px; color: #2b0f30; }
.fold { width: 24px; height: 24px; background: #f7f7f7; }
.fold.white { background: #fff; }
.fold svg { width: 12px; height: 12px; }
.tools { display: flex; gap: 4px; }
.sq { width: 30px; height: 30px; border: 1px solid #93dfa9; border-radius: 3px; color: #93dfa9; }
.sq svg { width: 15px; height: 15px; stroke-width: 1; }
.sq .tr, .mini .tr { width: 12px; height: 14px; stroke-width: 1.800; }
.sq.red { border-color: #ff4154; color: #ff4154; }
.sechead .sq.red { margin-right: 4px; }
.secfields { margin: 0 26px 0 27px; display: flex; flex-direction: column; gap: 20px; }
.product { margin: 22px 15px 12px; background: #fafafa; border-radius: 4px; padding: 11px 17px 22px 14px; }
.prodhead { display: flex; align-items: center; gap: 6px; }
.mini { display: flex; align-items: center; gap: 7px; color: #93dfa9; margin-right: 8px; }
.mini svg { width: 13px; height: 13px; stroke-width: 1; }
.mini i { width: 1px; height: 15px; background: #93dfa9; }
.mini .rd { color: #ff4154; }
.prodbody { padding: 12px 0 0 12px; }
.prodbody .picrow { margin-bottom: 22px; }
.prodbody .field { margin-bottom: 21px; }
.two { display: grid; grid-template-columns: 1fr 1fr; gap: 23px; }
.prodbody .two { gap: 0 23px; }
.allergens { display: grid; grid-template-columns: repeat(7, 42px); justify-content: space-between; row-gap: 10px; margin-top: 9px; }
.allergens button { height: 42px; border: 1px solid #e0e0d9; box-shadow: inset 0 0 0 1px #f0f0eb; border-radius: 3px; }
.allergens button.on { border: 2px solid #2bc155; outline: 1px solid #e4e6e0; }
.allergens svg { width: 27px; height: 27px; stroke: none; }
.al, .al path, .al circle { fill: #fff; stroke: #3a3a3a; stroke-width: 1.500; stroke-linejoin: round; }
.add { height: 42px; border: 1px solid #2bc155; border-radius: 3px; color: #2bc155; font-size: 13px; font-weight: 600; gap: 12px; }
.add svg { width: 13px; height: 13px; stroke-width: 1.700; }
.add.prod { width: calc(100% - 60px); margin: 0 30px 20px; }
.add.sect { width: calc(100% - 56px); margin: 18px 28px 0; }
.menu { padding-bottom: 23px; }

/* opening hours */
.days { padding: 17px 26px 14px 27px; display: flex; flex-direction: column; gap: 17px; }
.day { height: 49px; display: flex; align-items: center; background: #fafafa; border-radius: 6px; padding: 0 13px 0 7px; }
.day label { flex: 1; display: flex; align-items: center; gap: 15px; font-size: 12px; font-weight: 600; color: #0a0a0a; }
.day [type=checkbox] { appearance: none; width: 18px; height: 18px; border: 2px solid #757d86; border-radius: 6px; background: #fff; }
.time { width: 132px; height: 35px; border: 1px solid #bdbdc2; border-radius: 3px; background: #f7f7f7; display: flex; align-items: center; padding-left: 9px; margin-right: 23px; color: #cfcfd2; }
.time svg { width: 14px; height: 14px; margin-right: 12px; }
.time input { flex: 1; width: 0; height: 22px; border-left: 1px solid #c9c9cc; text-align: center; padding: 0 33px 0 0; color: #808085; }
.time input::placeholder { color: #d0d0d3; }
.day button { width: 38px; height: 35px; border: 1px solid #9493a0; border-radius: 3px; color: #93929c; }
.day button svg { width: 12px; height: 12px; stroke-width: 1.400; }

/* contact */
.contacts { padding-top: 9px; padding-bottom: 33px; display: flex; flex-direction: column; gap: 12px; }
.contact { border: 1px solid #ececee; border-radius: 3px; background: #fafafa; padding: 9px 0 37px; }
.conhead { display: flex; align-items: center; justify-content: space-between; padding: 0 8px 0 13px; }
.conhead h3 { font-size: 14px; line-height: 18px; font-weight: 600; }
.conhead button { width: 27px; height: 27px; border-radius: 3px; background: #2bc155; color: #fff; }
.conhead button svg { width: 13px; height: 13px; stroke-width: 1.200; }
.conrow { display: grid; grid-template-columns: 205fr 272fr 34px; gap: 12px; align-items: end; margin: 11px 10px 0; padding-top: 10px; border-top: 1px solid #ebebed; }
.cf label, .pair span { display: block; font-size: 9px; line-height: 12px; font-weight: 700; color: #7a8088; margin-bottom: 4px; }
.pair { display: flex; }
.pair span { width: 53px; }
.combo { display: flex; align-items: center; gap: 10px; }
.combo svg { width: 17px; height: 17px; color: #757d86; }
.combo i { width: 1px; height: 16px; background: #dedee0; }
.combo input { flex: 1; min-width: 0; }
.combo.tel { gap: 7px; padding-left: 8px; }
.combo .dn { width: 9px; height: 9px; stroke-width: 1.600; }
.conrow .sq { width: 34px; height: 34px; margin-bottom: 2px; }

/* social */
.social { padding-top: 8px; }
.netform { background: #fafafa; border-radius: 4px; padding: 8px 19px 20px; }
.nethead { display: flex; justify-content: space-between; height: 35px; margin-bottom: 27px; }
.snap { width: 35px; height: 35px; background: #fff; border-radius: 3px; display: grid; place-items: center; }
.snap svg { width: 24px; height: 24px; stroke: none; }
.nethead .tools { padding: 1px 3px 0 0; }
.nethead .sq { width: 33px; height: 34px; border-radius: 5px; }
.netform .field label { margin-bottom: 6px; }
.netform input { height: 34px; color: #0a0a0a; border-color: #bdbdc2; box-shadow: none; font-size: 12px; }
.netform input.focus { border: 2px solid #93929c; padding: 0 11px; }
.nets { margin-top: 12px; background: #f7f7f7; border-radius: 4px; padding: 11px 8px; display: grid; grid-template-columns: repeat(13, 1fr); gap: 4px; }
.nets button { height: 38px; border: 1px solid #ececee; border-radius: 3px; }
.nets svg { width: 29px; height: 29px; stroke: none; fill: #000; }
.nets text { font-weight: 700; text-anchor: middle; stroke: none; }
.nets .thin text { font-weight: 400; }

/* fonts */
.fonts { margin-top: 8px; background: #f7f7f7; border-radius: 4px; padding: 18px 11px 17px; display: grid; grid-template-columns: 1fr 1fr; gap: 23px; }
.fonts label { display: block; font-size: 9px; line-height: 12px; color: #7a8088; margin-bottom: 4px; }
.fonts select { appearance: none; width: 100%; height: 34px; border: 1px solid #bdbdc2; border-radius: 3px; background: #fff; padding: 0 18px; font-size: 13px; color: #0a0a0a; display: block; box-shadow: 0 24px 18px -4px rgba(0,0,0,.03); }
.fonts .serif { font-family: "DejaVu Serif", serif; font-size: 12px; }
.welcome { display: flex; align-items: center; gap: 36px; padding: 9px 12px 19px; }
.show { background: #93e0a7; }

/* sticky bars */
.topbar, .botbar { position: absolute; left: 0; right: 0; background: #fff; z-index: 5; }
.topbar { top: 86px; box-shadow: 0 2px 6px rgba(40,50,60,.13); }
.botbar { top: 79px; box-shadow: 0 0 8px rgba(40,50,60,.08); }
.barin { max-width: 890px; margin: 0 auto; display: flex; align-items: center; justify-content: space-between; }
.topbar .barin { height: 54px; }
.botbar .barin { height: 58px; }
.logo { display: flex; align-items: center; gap: 6px; color: #0a0a0a; text-decoration: none; font-size: 17px; line-height: 14px; width: 292px; }
.logo svg { width: 26px; height: 26px; stroke: none; }
.logo small { display: block; font-size: 13px; line-height: 12px; font-weight: 400; }
.steps { list-style: none; display: flex; align-items: center; font-size: 11px; font-weight: 700; color: #757d86; flex: 1; }
.steps li { display: flex; align-items: center; gap: 10px; white-space: nowrap; }
.steps .ok { color: #2bc155; }
.steps b { width: 17px; height: 17px; border-radius: 50%; background: #757d86; color: #fff; display: grid; place-items: center; font-size: 12px; }
.steps .ok b { background: #2bc155; }
.steps b svg { width: 11px; height: 11px; stroke-width: 1.500; }
.steps .arr { margin: 0 10px 0 8px; }
.steps .arr svg { width: 33px; height: 8px; stroke-width: 1.200; }
.acts { display: flex; gap: 8px; }
.acts button { width: 30px; height: 30px; border-radius: 4px; }
.ask { border: 1px solid #b9bcc0; color: #757d86; }
.ask svg { width: 17px; height: 17px; }
.acts .burger { background: #2bc155; color: #fff; }
.burger svg { width: 18px; height: 18px; stroke-width: 3; }
.back, .next { width: 116px; height: 39px; border-radius: 3px; font-size: 13px; font-weight: 700; }
.back { border: 1px solid #2bc155; color: #2bc155; gap: 6px; }
.next { background: #75db91; color: #fff; gap: 10px; }
.back svg, .next svg { width: 15px; height: 10px; stroke-width: 1.300; }

/* preview */
.preview { width: 198px; margin-top: 156px; }
.toggle { display: flex; height: 29px; border: 2px solid #2dd05b; border-radius: 15px; padding: 1px; margin-bottom: 6px; }
.toggle button { flex: 1; color: #2bc155; font-weight: 900; font-size: 12px; border-radius: 12px; }
.toggle .act { flex: 0 0 118px; background: #2dd05b; color: #fff; }
.phone { position: relative; width: 194px; height: 395px; margin: 0 auto; border: 2px solid #6b6270; border-radius: 32px; background: #000; padding: 6px 7px; }
.screen { position: relative; height: 100%; background: #f9fbfb; border-radius: 25px; overflow: hidden; padding: 0 12px; font-family: "Open Sans", sans-serif; }
.key { position: absolute; width: 2px; background: #6b6270; }
.k1 { left: -4px; top: 62px; height: 12px; }
.k2 { left: -4px; top: 86px; height: 24px; }
.k3 { left: -4px; top: 117px; height: 24px; }
.k4 { right: -4px; top: 103px; height: 37px; }
.status { display: flex; justify-content: space-between; align-items: end; height: 19px; background: #fff; padding: 0 0 1px 4px; font: 700 7px/8px Inter, sans-serif; color: #000; margin-bottom: 16px; }
.status svg { width: 27px; height: 6px; stroke: none; fill: #000; }
.island { position: absolute; left: 54px; top: 6px; width: 61px; height: 18px; border-radius: 9px; background: #000; }
.island i { position: absolute; right: 7px; top: 6px; width: 5px; height: 5px; border-radius: 50%; background: #10175a; }
.pc { background: #fff; border-radius: 2px; box-shadow: 0 2px 12px rgba(30,60,50,.05); }
.pc svg { stroke-width: 1.500; }
.one { height: 62px; padding: 15px 20px; }
.one svg { width: 24px; height: 24px; stroke: none; }
.screen h3 { font-size: 13px; line-height: 18px; font-weight: 400; color: #1d2433; margin: 17px 0 6px; white-space: nowrap; }
.two2 { height: 53px; display: flex; align-items: center; gap: 6px; padding: 0 10px 0 7px; }
.two2 .gh { width: 34px; height: 34px; stroke: none; }
.two2 div { flex: 1; }
.two2 b { font-weight: 400; font-size: 10px; line-height: 13px; display: block; }
.two2 small { font-size: 8px; line-height: 11px; color: #7a8088; display: block; }
.go { width: 15px; height: 10px; color: #757d86; }
.three { margin-top: 19px; padding: 15px 9px 0; height: 200px; }
.kon { display: flex; align-items: center; gap: 14px; padding-bottom: 8px; }
.kon span { width: 33px; height: 33px; border-radius: 3px; background: #f8f8f9; display: grid; place-items: center; color: #757d86; }
.kon svg { width: 15px; height: 15px; }
.kon b { font-weight: 400; font-size: 13px; color: #0a0a0a; }
.line { border-top: 1px solid #f0f0f0; height: 54px; display: flex; align-items: center; gap: 8px; }
.line span { width: 30px; height: 30px; border-radius: 50%; background: #f9f9f9; display: grid; place-items: center; color: #757d86; }
.line svg { width: 13px; height: 13px; stroke-width: 1.800; }
.line p { font-size: 10px; line-height: 15px; color: #0a0a0a; white-space: nowrap; }
.line small { display: block; font-size: 9px; line-height: 12px; color: #7a8088; }
.home { position: absolute; left: 50px; bottom: 7px; width: 76px; height: 3px; border-radius: 2px; background: #000; }

.end .last { padding: 9px 12px 20px; }
.last .panel { padding-bottom: 4px; }
.last .field input { height: 34px; }
```
